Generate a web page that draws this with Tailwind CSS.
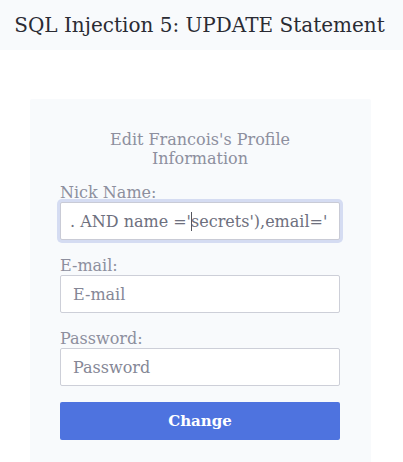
<!DOCTYPE html>
<html lang="en">
<head>
<meta charset="utf-8">
<meta name="viewport" content="width=device-width, initial-scale=1">
<title>SQL Injection 5: UPDATE Statement</title>
<script src="https://cdn.jsdelivr.net/npm/@tailwindcss/browser@4"></script>
</head>
<body class="flex min-h-screen flex-col bg-white font-['DejaVu_Serif',serif] text-base leading-[19px] text-[#8d8f9e]">
  <header class="bg-[#f8fafc] pt-3 pr-3 pb-3 pl-2 text-center">
    <h1 class="flex justify-center text-xl leading-[26px] whitespace-nowrap text-[#2a2b33]">SQL Injection 5: UPDATE Statement</h1>
  </header>
  <main class="mt-[49px] mr-8 ml-[30px] flex-1 rounded-t-xs bg-[#f8fafc] pt-[31px] pr-[31px] pb-[22px] pl-[30px]">
    <form class="flex flex-col gap-4">
      <h2 class="px-8 text-center">Edit Francois's Profile Information</h2>
      <div class="-mt-px flex flex-col">
        <label for="nick">Nick Name:</label>
        <div class="relative flex">
          <input id="nick" type="text" value=". AND name ='secrets'),email='" class="h-[38px] w-full min-w-0 rounded-xs border border-[#c9cbd6] bg-white px-[9px] text-[#6e707e] ring-3 ring-[#d5dcf2] outline-none">
          <span class="absolute top-[10px] left-[131px] h-[19px] w-px bg-[#55565f]" aria-hidden="true"></span>
        </div>
      </div>
      <div class="flex flex-col">
        <label for="email">E-mail:</label>
        <input id="email" type="text" placeholder="E-mail" class="h-[38px] w-full rounded-xs border border-[#cdcfd8] bg-white px-3 outline-none placeholder:text-[#858796]">
      </div>
      <div class="flex flex-col">
        <label for="password">Password:</label>
        <input id="password" type="password" placeholder="Password" class="h-[38px] w-full rounded-xs border border-[#cdcfd8] bg-white px-3 outline-none placeholder:text-[#858796]">
      </div>
      <button type="submit" class="h-[38px] rounded-xs bg-[#4e73df] text-[15px] font-bold text-white">Change</button>
    </form>
  </main>
</body>
</html>
